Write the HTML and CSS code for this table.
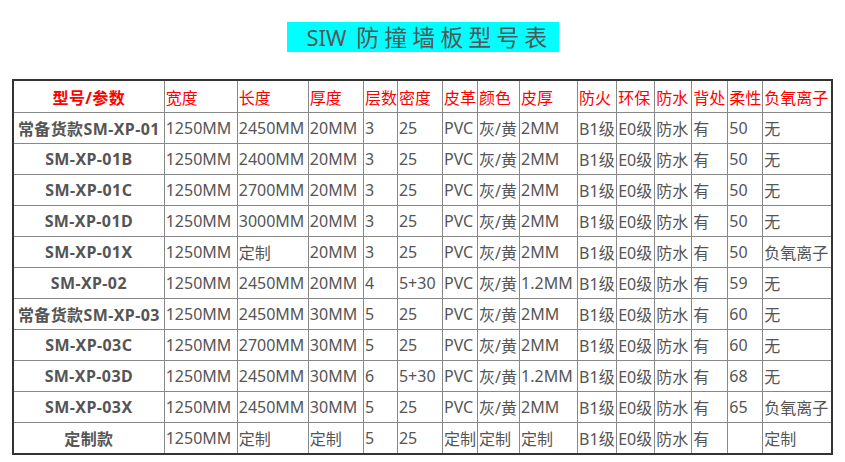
FILE: index.html
```html
<!DOCTYPE html>
<html lang="zh">
<head>
<meta charset="utf-8">
<title>SIW 防撞墙板型号表</title>
<link rel="stylesheet" href="styles.css">
</head>
<body>
<div class="page">
  <div class="title-wrap"><h1 class="title"><span class="latin">SIW</span> <span class="cjk">防撞墙板型号表</span></h1></div>
  <table class="spec">
    <colgroup>
      <col class="c1"><col class="c2"><col class="c3"><col class="c4"><col class="c5"><col class="c6"><col class="c7"><col class="c8"><col class="c9"><col class="c10"><col class="c11"><col class="c12"><col class="c13"><col class="c14"><col class="c15">
    </colgroup>
    <thead>
      <tr class="head">
        <th class="model">型号/参数</th><th>宽度</th><th>长度</th><th>厚度</th><th>层数</th><th>密度</th><th>皮革</th><th>颜色</th><th>皮厚</th><th>防火</th><th>环保</th><th>防水</th><th>背处</th><th>柔性</th><th>负氧离子</th>
      </tr>
    </thead>
    <tbody>
      <tr><td class="model">常备货款SM-XP-01</td><td>1250MM</td><td>2450MM</td><td>20MM</td><td>3</td><td>25</td><td>PVC</td><td>灰/黄</td><td>2MM</td><td>B1级</td><td>E0级</td><td>防水</td><td>有</td><td>50</td><td>无</td></tr>
      <tr><td class="model">SM-XP-01B</td><td>1250MM</td><td>2400MM</td><td>20MM</td><td>3</td><td>25</td><td>PVC</td><td>灰/黄</td><td>2MM</td><td>B1级</td><td>E0级</td><td>防水</td><td>有</td><td>50</td><td>无</td></tr>
      <tr><td class="model">SM-XP-01C</td><td>1250MM</td><td>2700MM</td><td>20MM</td><td>3</td><td>25</td><td>PVC</td><td>灰/黄</td><td>2MM</td><td>B1级</td><td>E0级</td><td>防水</td><td>有</td><td>50</td><td>无</td></tr>
      <tr><td class="model">SM-XP-01D</td><td>1250MM</td><td>3000MM</td><td>20MM</td><td>3</td><td>25</td><td>PVC</td><td>灰/黄</td><td>2MM</td><td>B1级</td><td>E0级</td><td>防水</td><td>有</td><td>50</td><td>无</td></tr>
      <tr><td class="model">SM-XP-01X</td><td>1250MM</td><td>定制</td><td>20MM</td><td>3</td><td>25</td><td>PVC</td><td>灰/黄</td><td>2MM</td><td>B1级</td><td>E0级</td><td>防水</td><td>有</td><td>50</td><td>负氧离子</td></tr>
      <tr><td class="model">SM-XP-02</td><td>1250MM</td><td>2450MM</td><td>20MM</td><td>4</td><td>5+30</td><td>PVC</td><td>灰/黄</td><td>1.2MM</td><td>B1级</td><td>E0级</td><td>防水</td><td>有</td><td>59</td><td>无</td></tr>
      <tr><td class="model">常备货款SM-XP-03</td><td>1250MM</td><td>2450MM</td><td>30MM</td><td>5</td><td>25</td><td>PVC</td><td>灰/黄</td><td>2MM</td><td>B1级</td><td>E0级</td><td>防水</td><td>有</td><td>60</td><td>无</td></tr>
      <tr><td class="model">SM-XP-03C</td><td>1250MM</td><td>2700MM</td><td>30MM</td><td>5</td><td>25</td><td>PVC</td><td>灰/黄</td><td>2MM</td><td>B1级</td><td>E0级</td><td>防水</td><td>有</td><td>60</td><td>无</td></tr>
      <tr><td class="model">SM-XP-03D</td><td>1250MM</td><td>2450MM</td><td>30MM</td><td>6</td><td>5+30</td><td>PVC</td><td>灰/黄</td><td>1.2MM</td><td>B1级</td><td>E0级</td><td>防水</td><td>有</td><td>68</td><td>无</td></tr>
      <tr><td class="model">SM-XP-03X</td><td>1250MM</td><td>2450MM</td><td>30MM</td><td>5</td><td>25</td><td>PVC</td><td>灰/黄</td><td>2MM</td><td>B1级</td><td>E0级</td><td>防水</td><td>有</td><td>65</td><td>负氧离子</td></tr>
      <tr><td class="model">定制款</td><td>1250MM</td><td>定制</td><td>定制</td><td>5</td><td>25</td><td>定制</td><td>定制</td><td>定制</td><td>B1级</td><td>E0级</td><td>防水</td><td>有</td><td></td><td>定制</td></tr>
    </tbody>
  </table>
</div>
</body>
</html>
```
FILE: styles.css
```css
html, body {
  margin: 0;
  padding: 0;
  background: #fff;
}
body {
  font-family: "Noto Sans", "Noto Sans CJK SC", sans-serif;
  color: #555;
}
.page {
  padding: 22px 0 0 12px;
  width: 821px;
}
.title-wrap {
  display: flex;
  justify-content: center;
}
.title {
  margin: 0;
  background: #00ffff;
  width: 272px;
  height: 30px;
  box-sizing: border-box;
  padding-left: 20px;
  font-weight: normal;
  font-size: 22px;
  line-height: 30px;
  color: #555;
  white-space: nowrap;
  font-family: "Noto Sans", "Noto Sans CJK SC", sans-serif;
}
.title .latin {
  letter-spacing: 0;
  margin-right: 4px;
}
.title .cjk {
  font-size: 23px;
  letter-spacing: 5px;
}
.spec {
  margin-top: 27px;
  border-collapse: collapse;
  table-layout: fixed;
  width: 821px;
  border: 2px solid #333;
  font-size: 16px;
}
.spec th, .spec td {
  border: 1px solid #888;
  padding: 0 0 0 1px;
  text-align: left;
  white-space: nowrap;
  overflow: hidden;
  font-weight: normal;
  height: 30px;
}
.spec .head th {
  color: #ff0000;
  height: 31px;
}
.spec .model {
  font-weight: bold;
  text-align: center;
  padding: 0;
  letter-spacing: 0.4px;
}
.c1 { width: 151px; }
.c2 { width: 73px; }
.c3 { width: 71px; }
.c4 { width: 55px; }
.c5 { width: 34px; }
.c6 { width: 45px; }
.c7 { width: 35px; }
.c8 { width: 42px; }
.c9 { width: 58px; }
.c10 { width: 39px; }
.c11 { width: 38px; }
.c12 { width: 37px; }
.c13 { width: 36px; }
.c14 { width: 35px; }
.c15 { width: 69px; }
```
